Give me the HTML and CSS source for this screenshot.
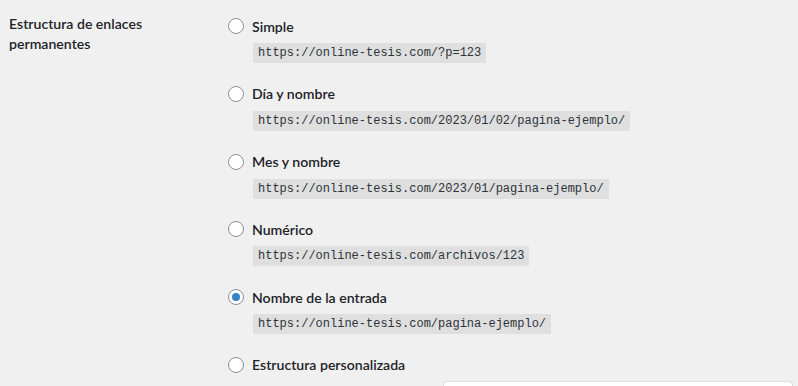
FILE: index.html
```html
<!DOCTYPE html>
<html lang="es">
<head>
    <meta charset="UTF-8">
    <title>Enlaces permanentes</title>
    <link rel="stylesheet" href="styles.css">
</head>
<body>
    <div class="form-row">
        <div class="row-label">Estructura de enlaces permanentes</div>
        <div class="row-field">
            <div class="option">
                <label class="choice"><span class="radio"></span>Simple</label>
                <code>https://online-tesis.com/?p=123</code>
            </div>
            <div class="option">
                <label class="choice"><span class="radio"></span>Día y nombre</label>
                <code>https://online-tesis.com/2023/01/02/pagina-ejemplo/</code>
            </div>
            <div class="option">
                <label class="choice"><span class="radio"></span>Mes y nombre</label>
                <code>https://online-tesis.com/2023/01/pagina-ejemplo/</code>
            </div>
            <div class="option">
                <label class="choice"><span class="radio"></span>Numérico</label>
                <code>https://online-tesis.com/archivos/123</code>
            </div>
            <div class="option">
                <label class="choice"><span class="radio checked"></span>Nombre de la entrada</label>
                <code>https://online-tesis.com/pagina-ejemplo/</code>
            </div>
            <div class="option">
                <label class="choice"><span class="radio"></span>Estructura personalizada</label>
                <div class="custom">
                    <code>https://online-tesis.com</code>
                    <input type="text" class="custom-input" value="/%postname%/">
                </div>
            </div>
        </div>
    </div>
</body>
</html>
```

FILE: styles.css
```css
body {
    margin: 0;
    background: #f0f0f1;
    color: #1d2327;
    font-family: Lato, "Open Sans", sans-serif;
    font-size: 14.1px;
}

.form-row {
    display: flex;
    align-items: flex-start;
}

.row-label {
    flex: 0 0 200px;
    margin-left: 9px;
    margin-right: 19px;
    padding-top: 14px;
    font-weight: 600;
    line-height: 20px;
}

.row-field {
    padding-top: 16px;
}

.option {
    margin-bottom: 20.8px;
}

.choice {
    display: flex;
    align-items: center;
    height: 20px;
    font-weight: 600;
}

.radio {
    box-sizing: border-box;
    width: 16px;
    height: 16px;
    margin-right: 8px;
    border: 1px solid #8c8f94;
    border-radius: 50%;
    background: #fff;
    display: flex;
    align-items: center;
    justify-content: center;
}

.radio.checked::before {
    content: "";
    width: 8px;
    height: 8px;
    border-radius: 50%;
    background: #3582c4;
}

code {
    display: inline-block;
    margin: 7px 0 0 25px;
    padding: 0 5px;
    line-height: 20px;
    background: rgba(0, 0, 0, 0.07);
    font-family: "Liberation Mono", monospace;
    font-size: 12px;
    color: #2c3338;
}

.custom {
    display: flex;
    align-items: center;
    margin-top: 6px;
}

.custom code {
    margin-top: 0;
    margin-right: 7px;
}

.custom-input {
    box-sizing: border-box;
    width: 350px;
    height: 30px;
    padding: 0 8px;
    border: 1px solid #dcdcde;
    border-radius: 4px;
    background: #fff;
    font-family: "Liberation Mono", monospace;
    font-size: 13px;
}
```
